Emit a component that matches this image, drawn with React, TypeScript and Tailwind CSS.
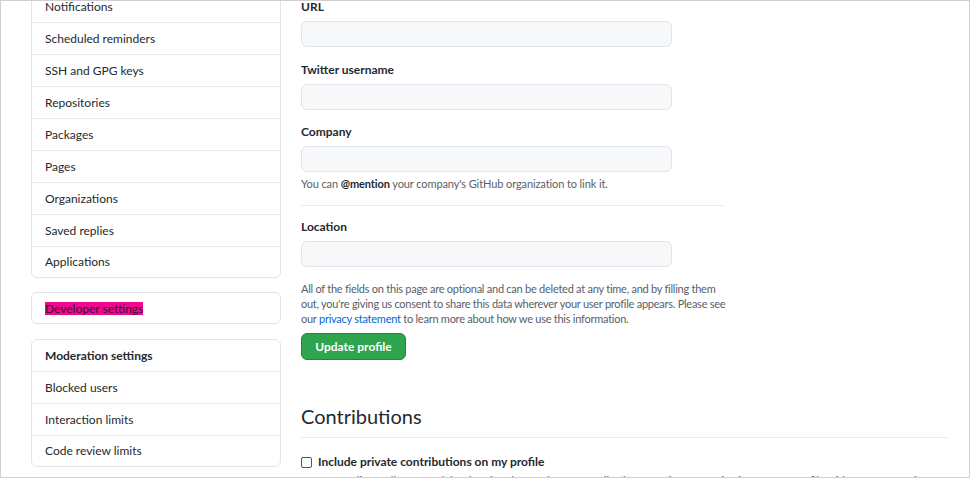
import React from "react";

const font = { fontFamily: "Lato, 'Noto Sans', 'Liberation Sans', sans-serif" };

function Row({ children, bold, last, hl }: { children: React.ReactNode; bold?: boolean; last?: boolean; hl?: boolean }) {
  return (
    <div
      className={
        "flex items-center pl-[13px] text-[12px] text-[#24292e] " +
        (last ? "h-[30px] " : "h-[32px] border-b border-[#eaecef] ") +
        (bold ? "font-bold" : "")
      }
    >
      {hl ? <span className="bg-[#ee0a8f] leading-[13px] text-[#3b1030]">{children}</span> : children}
    </div>
  );
}

function Field({ label, className }: { label: string; className?: string }) {
  return (
    <div className={className}>
      <div className="h-[20px] leading-[20px] text-[12px] font-bold text-[#24292e]">{label}</div>
      <div className="mt-[4px] h-[26px] w-[371px] rounded-[6px] border border-[#e1e4e8] bg-[#f6f8fa]"></div>
    </div>
  );
}

export default function App() {
  const top = ["Notifications", "Scheduled reminders", "SSH and GPG keys", "Repositories", "Packages", "Pages", "Organizations", "Saved replies", "Applications"];
  return (
    <div className="w-[970px] h-[478px] border border-[#cfcfcf] overflow-hidden bg-white" style={font}>
      <div className="flex -mt-[11px] pl-[30px]">
        <div className="w-[250px] shrink-0">
          <div className="rounded-[6px] border border-[#e1e4e8]">
            {top.map((t, i) => (
              <Row key={t} last={i === top.length - 1}>{t}</Row>
            ))}
          </div>
          <div className="mt-[14px] rounded-[6px] border border-[#e1e4e8]">
            <Row last hl>Developer settings</Row>
          </div>
          <div className="mt-[15px] rounded-[6px] border border-[#e1e4e8]">
            <Row bold>Moderation settings</Row>
            <Row>Blocked users</Row>
            <Row>Interaction limits</Row>
            <Row last>Code review limits</Row>
          </div>
        </div>
        <div className="ml-[20px] flex-1 pr-[20px]">
          <Field label="URL" className="pt-[7px]" />
          <Field label="Twitter username" className="mt-[13px]" />
          <Field label="Company" className="mt-[12px]" />
          <div className="mt-[4px] text-[11px] leading-[16px] tracking-[-0.1px] text-[#586069]">
            You can <span className="font-bold text-[#24292e]">@mention</span> your company's GitHub organization to link it.
          </div>
          <div className="mt-[13px] w-[424px] border-t border-[#eaecef]"></div>
          <Field label="Location" className="mt-[11px]" />
          <div className="mt-[14px] w-[430px] text-[11px] leading-[15px] tracking-[-0.25px] text-[#586069]">
            All of the fields on this page are optional and can be deleted at any time, and by filling them out, you're giving us consent to share this data wherever your user profile appears. Please see our <span className="text-[#0366d6]">privacy statement</span> to learn more about how we use this information.
          </div>
          <button className="mt-[7px] h-[27px] w-[105px] rounded-[6px] border border-[#22863a] bg-[#2ea44f] text-[12px] font-bold text-white">
            Update profile
          </button>
          <div className="mt-[43px] pb-[8px] text-[20px] leading-[26px] text-[#24292e]">Contributions</div>
          <div className="w-[648px] border-t border-[#eaecef]"></div>
          <div className="mt-[15px] flex items-center gap-[6px]">
            <span className="inline-block h-[11px] w-[11px] rounded-[2px] border border-[#555]"></span>
            <span className="text-[12px] font-bold text-[#24292e]">Include private contributions on my profile</span>
          </div>
          <div className="pl-[17px] mt-[2px] text-[11px] leading-[15px] text-[#586069] whitespace-nowrap">
            Get credit for all your work by showing the number of contributions to private repositories on your profile without any repository or organization information.
          </div>
        </div>
      </div>
    </div>
  );
}
